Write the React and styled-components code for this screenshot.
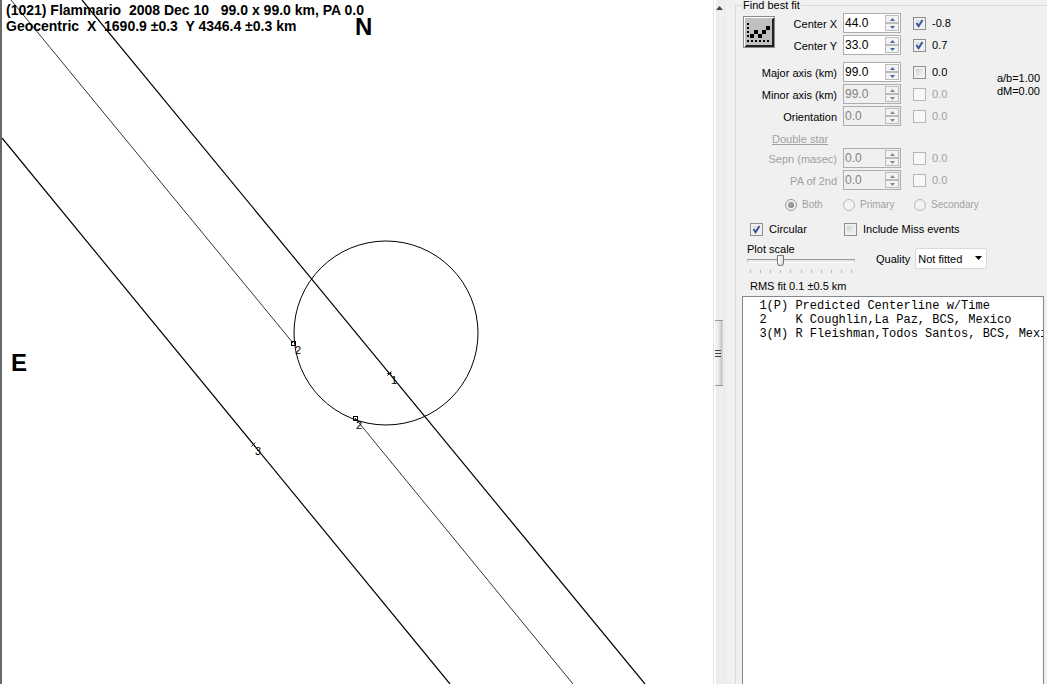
import {useState} from 'react';
import styled, {createGlobalStyle} from 'styled-components';

const GlobalStyle = createGlobalStyle`
    *, *::before, *::after {
        box-sizing: border-box;
    }

    body {
        margin: 0;
        background-color: #f0f0f0;
        color: #000;
        font: 11px/14px "Liberation Sans", Arial, sans-serif;
    }

    button, input, select {
        font: inherit;
        color: inherit;
    }
`

const Window = styled.div`
    display: flex;
    height: 100vh;
    overflow: hidden;
`

/* Plot */

const PlotArea = styled.main`
    position: relative;
    flex: 1;
    min-width: 0;
    border-left: 2px solid #696969;
    background-color: #fff;
    overflow: hidden;
`

const PlotTitle = styled.h1`
    position: absolute;
    top: 2px;
    left: 4px;
    margin: 0;
    font-size: 14px;
    font-weight: bold;
    line-height: 16px;
    white-space: pre;
`

const PlotDrawing = styled.svg`
    display: block;
    width: 100%;
    height: 100%;
    fill: none;
    stroke: #000;

    text {
        fill: #000;
        stroke: none;
        font-size: 11px;
    }

    .compass {
        font-size: 24px;
        font-weight: bold;
    }

    .chord {
        stroke-width: 0.8;
    }
`

function Plot() {
    return (
        <PlotArea>
            <PlotDrawing>
                <line x1="80" y1="0" x2="643" y2="684" strokeWidth="1.2"/>
                <line x1="0" y1="138" x2="448" y2="684" strokeWidth="1.2"/>
                <line className="chord" x1="9" y1="0" x2="291" y2="343"/>
                <line className="chord" x1="353" y1="418" x2="571" y2="684"/>
                <circle cx="384" cy="333" r="92"/>
                <rect x="289.5" y="341.5" width="4" height="4"/>
                <rect x="351.5" y="416.5" width="4" height="4"/>
                <path d="M385.5 371.5l4 4m0-4l-4 4M385.5 373.5h4"/>
                <path d="M249.5 442.5l4 4m0-4l-4 4" strokeWidth="0.8"/>
                <text x="389" y="384">1</text>
                <text x="293" y="354">2</text>
                <text x="354" y="429">2</text>
                <text x="253" y="455">3</text>
                <text className="compass" x="353" y="35">N</text>
                <text className="compass" x="9" y="371">E</text>
            </PlotDrawing>
            <PlotTitle>
                {'(1021) Flammario  2008 Dec 10   99.0 x 99.0 km, PA 0.0\n'}
                {'Geocentric  X  1690.9 ±0.3  Y 4346.4 ±0.3 km'}
            </PlotTitle>
        </PlotArea>
    )
}

/* Scroll bar between the plot and the panel */

const ScrollTrack = styled.div`
    display: flex;
    flex-direction: column;
    width: 12px;
    border-left: 1px solid #e3e3e3;
    border-right: 1px solid #e8e8e8;
    background: linear-gradient(to right, #fff 2px, #ebebeb 2px, #f0f0f0);
`

const ScrollArrow = styled.button`
    height: 16px;
    padding: 0 0 0 1px;
    border: 0;
    background: none;

    svg {
        display: block;
        margin: auto;
    }
`

const ScrollSpace = styled.div`
    flex: ${({$grow}) => $grow} 0 0;
`

const ScrollThumb = styled.div`
    display: flex;
    flex-direction: column;
    justify-content: center;
    gap: 2px;
    height: 66px;
    margin: 0 1px 0 1px;
    border: solid #979797;
    border-width: 1px 0;
    background: linear-gradient(to right, #f5f5f5, #e9e9eb 45%, #c4c4c8 85%, #d9d9dc);

    i {
        width: 6px;
        height: 1px;
        background-color: #444;
    }
`

function ScrollBar() {
    return (
        <ScrollTrack>
            <ScrollArrow aria-label="Scroll up">
                <svg width="7" height="4"><path d="M0 4L3.5 0L7 4z" fill="#444"/></svg>
            </ScrollArrow>
            <ScrollSpace $grow={304}/>
            <ScrollThumb><i/><i/><i/></ScrollThumb>
            <ScrollSpace $grow={298}/>
        </ScrollTrack>
    )
}

/* Fit panel */

const Panel = styled.fieldset`
    display: flex;
    flex-direction: column;
    width: 312px;
    min-width: 0;
    height: 100%;
    margin: 0 0 0 10px;
    padding: 3px 3px 0 6px;
    border: solid #d0dbe3;
    border-width: 1px 0 0 1px;
`

const Legend = styled.legend`
    padding: 0 1px;
    line-height: 10px;
`

const Fields = styled.div`
    display: grid;
    grid-template-columns: 95px 58px 1fr auto;
    grid-auto-rows: 20px;
    gap: 2px 6px;
    margin-bottom: 7px;
`

const FitButton = styled.button`
    grid-area: 1 / 1 / span 2 / 2;
    justify-self: start;
    width: 32px;
    height: 32px;
    margin: 3px 0 0 1px;
    padding: 0;
    border: 1px solid #8a8a8a;
    background-color: #c0c0c0;

    svg {
        display: block;
    }
`

const FieldLabel = styled.label`
    grid-column: 1;
    grid-row: ${({$row}) => $row};
    align-self: center;
    justify-self: end;
    padding-top: 2px;
    color: ${({$dimmed}) => $dimmed ? '#a0a0a0' : '#000'};
`

const SpinBox = styled.div`
    display: flex;
    grid-column: 2;
    grid-row: ${({$row}) => $row};
    padding: 1px;
    border: 1px solid #abadb3;
    background-color: ${({$disabled}) => $disabled ? '#f0f0f0' : '#fff'};
`

const SpinInput = styled.input`
    flex: 1;
    width: 0;
    height: 15px;
    padding: 0;
    border: 0;
    background: none;
    font-size: 12px;

    &:disabled {
        color: #838383;
    }
`

const SpinButtons = styled.div`
    display: flex;
    flex-direction: column;
    width: 14px;
`

const SpinButton = styled.button`
    display: flex;
    flex: 1;
    align-items: center;
    justify-content: center;
    padding: 0;
    border: 1px solid #bcbcc0;
    background-color: #f3f3f3;
    color: #4a63a8;

    &:disabled {
        color: #888;
    }
`

const CheckLabel = styled.label`
    display: flex;
    align-items: center;
    gap: 6px;
    color: ${({$disabled}) => $disabled ? '#a0a0a0' : '#000'};
`

const FieldCheck = styled(CheckLabel)`
    grid-column: 3;
    grid-row: ${({$row}) => $row};
    padding-left: 6px;
`

const checkMark = encodeURIComponent('<svg xmlns="http://www.w3.org/2000/svg" width="11" height="11"><path d="M2.5 5L4.6 8.2L8.5 2" fill="none" stroke="#3c5499" stroke-width="2"/></svg>')

const CheckBox = styled.input.attrs({type: 'checkbox'})`
    appearance: none;
    width: 13px;
    height: 13px;
    margin: 0;
    border: 1px solid #8e8f8f;
    background: linear-gradient(135deg, #cdd0d5, #f6f6f6) content-box #f4f4f4;
    padding: 2px;

    &:checked {
        background: url("data:image/svg+xml,${checkMark}") border-box center no-repeat, linear-gradient(135deg, #d5d9e2, #f6f6f6) content-box #f4f4f4;
    }

    &:disabled {
        border-color: #b6b6b6;
        background: #f8f8f8;
    }
`

const Readout = styled.div`
    grid-area: 1 / 4 / span 2 / 5;
    padding: 10px 4px 0 0;
    line-height: 13px;
    text-align: right;
`

const SubHeading = styled.h2`
    margin: -1px 0 2px 30px;
    color: #a0a0a0;
    font-size: 11px;
    font-weight: normal;
    line-height: 14px;
    text-decoration: underline;
`

const RadioRow = styled.div`
    display: grid;
    grid-template-columns: 58px 71px 1fr;
    margin: 1px 0 10px 43px;
    color: #a0a0a0;
    font-size: 10px;

    label {
        display: flex;
        align-items: center;
        gap: 5px;
    }
`

const Radio = styled.input.attrs({type: 'radio'})`
    appearance: none;
    width: 12px;
    height: 12px;
    margin: 0;
    padding: 2px;
    border: 1px solid #b8b8b8;
    border-radius: 50%;
    background-color: #f2f2f2;

    &:checked {
        border-color: #999;
        background: radial-gradient(circle at 40% 40%, #aaa, #777) content-box #f2f2f2;
    }
`

const OptionRow = styled.div`
    display: grid;
    grid-template-columns: 94px 1fr;
    margin: 0 0 6px 8px;
`

const ScaleRow = styled.div`
    display: flex;
    align-items: flex-start;
    padding-left: 5px;
`

const Scale = styled.div`
    width: 108px;
    margin-right: 21px;

    label, svg {
        display: block;
    }
`

const ScaleSlider = styled.input.attrs({type: 'range'})`
    appearance: none;
    display: block;
    width: 100%;
    height: 11px;
    margin: -1px 0 4px;
    background: none;

    &::-webkit-slider-runnable-track {
        height: 4px;
        border: 1px solid #c6c6c6;
        border-top-color: #999;
        border-bottom-color: #fff;
        background-color: #e9e9e9;
    }

    &::-webkit-slider-thumb {
        appearance: none;
        width: 7px;
        height: 11px;
        margin-top: -5px;
        border: 1px solid #777;
        border-radius: 1px 1px 4px 4px;
        background: linear-gradient(to right, #fff, #ddd);
    }
`

const QualityLabel = styled.label`
    padding: 10px 0 0;
`

const QualitySelect = styled.select`
    appearance: none;
    width: 72px;
    height: 21px;
    margin: 6px 0 0 5px;
    padding: 0 2px;
    border: 1px solid #d5d9e3;
    border-radius: 2px;
    background-color: #fff;
`

const SelectWrap = styled.div`
    position: relative;

    svg {
        position: absolute;
        top: 14px;
        right: 5px;
        pointer-events: none;
    }
`

const FitResult = styled.p`
    margin: 5px 0 3px 8px;
`

const ChordList = styled.ul`
    flex: 1;
    min-height: 60px;
    margin: 0;
    padding: 2px;
    border: solid #828790;
    border-width: 1px 1px 0;
    background-color: #fff;
    font: 12px/14px "Liberation Mono", "Courier New", monospace;
    list-style: none;
    overflow: hidden;

    li {
        white-space: pre;
    }
`

const CENTER_FIELDS = [
    {label: 'Center X', value: '44.0', change: '-0.8', checked: true},
    {label: 'Center Y', value: '33.0', change: '0.7', checked: true},
]

const AXIS_FIELDS = [
    {label: 'Major axis (km)', value: '99.0', change: '0.0'},
    {label: 'Minor axis (km)', value: '99.0', change: '0.0', disabled: true},
    {label: 'Orientation', value: '0.0', change: '0.0', disabled: true},
]

const DOUBLE_FIELDS = [
    {label: 'Sepn (masec)', value: '0.0', change: '0.0', disabled: true, dimmed: true},
    {label: 'PA of 2nd', value: '0.0', change: '0.0', disabled: true, dimmed: true},
]

const CHORDS = [
    '  1(P) Predicted Centerline w/Time',
    '  2    K Coughlin,La Paz, BCS, Mexico',
    '  3(M) R Fleishman,Todos Santos, BCS, Mexico',
]

function Field({row, label, value, change, checked, disabled, dimmed}) {
    const [current, setCurrent] = useState(value);
    const id = label.replace(/\W/g, '');
    const step = (delta) => setCurrent((Number(current) + delta).toFixed(1));

    return (
        <>
            <FieldLabel htmlFor={id} $row={row} $dimmed={dimmed}>{label}</FieldLabel>
            <SpinBox $row={row} $disabled={disabled}>
                <SpinInput id={id} value={current} disabled={disabled}
                           onChange={(e) => setCurrent(e.target.value)}
                />
                <SpinButtons>
                    <SpinButton aria-label={`${label} up`} disabled={disabled} onClick={() => step(1)}>
                        <svg width="5" height="3"><path d="M0 3L2.5 0L5 3z" fill="currentColor"/></svg>
                    </SpinButton>
                    <SpinButton aria-label={`${label} down`} disabled={disabled} onClick={() => step(-1)}>
                        <svg width="5" height="3"><path d="M0 0L2.5 3L5 0z" fill="currentColor"/></svg>
                    </SpinButton>
                </SpinButtons>
            </SpinBox>
            <FieldCheck $row={row} $disabled={disabled}>
                <CheckBox defaultChecked={checked} disabled={disabled}/>
                {change}
            </FieldCheck>
        </>
    )
}

function FitIcon() {
    return (
        <svg width="30" height="30" shapeRendering="crispEdges">
            <path d="M0 0h30v1H1v29H0z" fill="#fff"/>
            <path d="M30 0v30H0l2-2h26V2z" fill="#222"/>
            <path d="M3 6h2v2H3zM3 10h2v2H3zM3 14h2v2H3zM3 18h2v2H3zM3 23h2v2H3zM7 23h2v2H7zM11 23h2v2h-2zM15 23h2v2h-2zM19 23h2v2h-2zM23 23h2v2h-2z"/>
            <path d="M6 17h4v4H6zM10 13h4v4h-4zM14 17h4v4h-4zM18 13h4v4h-4zM22 9h4v4h-4z"/>
        </svg>
    )
}

function ScaleTicks() {
    return (
        <svg width="108" height="4" shapeRendering="crispEdges">
            {Array.from({length: 11}, (_, i) => (
                <rect key={i} x={3 + Math.round(i * 10.1)} width="1" height="3" fill="#b8b8b8"/>
            ))}
        </svg>
    )
}

function FitPanel() {
    return (
        <Panel>
            <Legend>Find best fit</Legend>
            <Fields>
                <FitButton aria-label="Find best fit"><FitIcon/></FitButton>
                {CENTER_FIELDS.map((field, i) => <Field key={field.label} row={i + 1} {...field}/>)}
            </Fields>
            <Fields>
                {AXIS_FIELDS.map((field, i) => <Field key={field.label} row={i + 1} {...field}/>)}
                <Readout>a/b=1.00<br/>dM=0.00</Readout>
            </Fields>
            <SubHeading>Double star</SubHeading>
            <Fields>
                {DOUBLE_FIELDS.map((field, i) => <Field key={field.label} row={i + 1} {...field}/>)}
            </Fields>
            <RadioRow>
                <label><Radio name="star" defaultChecked disabled/>Both</label>
                <label><Radio name="star" disabled/>Primary</label>
                <label><Radio name="star" disabled/>Secondary</label>
            </RadioRow>
            <OptionRow>
                <CheckLabel><CheckBox defaultChecked/>Circular</CheckLabel>
                <CheckLabel><CheckBox/>Include Miss events</CheckLabel>
            </OptionRow>
            <ScaleRow>
                <Scale>
                    <label htmlFor="scale">Plot scale</label>
                    <ScaleSlider id="scale" defaultValue="29"/>
                    <ScaleTicks/>
                </Scale>
                <QualityLabel htmlFor="quality">Quality</QualityLabel>
                <SelectWrap>
                    <QualitySelect id="quality">
                        <option>Not fitted</option>
                    </QualitySelect>
                    <svg width="7" height="4"><path d="M0 0h7L3.5 4z"/></svg>
                </SelectWrap>
            </ScaleRow>
            <FitResult>RMS fit 0.1 ±0.5 km</FitResult>
            <ChordList>
                {CHORDS.map((chord) => <li key={chord}>{chord}</li>)}
            </ChordList>
        </Panel>
    )
}

export default function App() {
    return (
        <Window>
            <GlobalStyle/>
            <Plot/>
            <ScrollBar/>
            <FitPanel/>
        </Window>
    )
};
